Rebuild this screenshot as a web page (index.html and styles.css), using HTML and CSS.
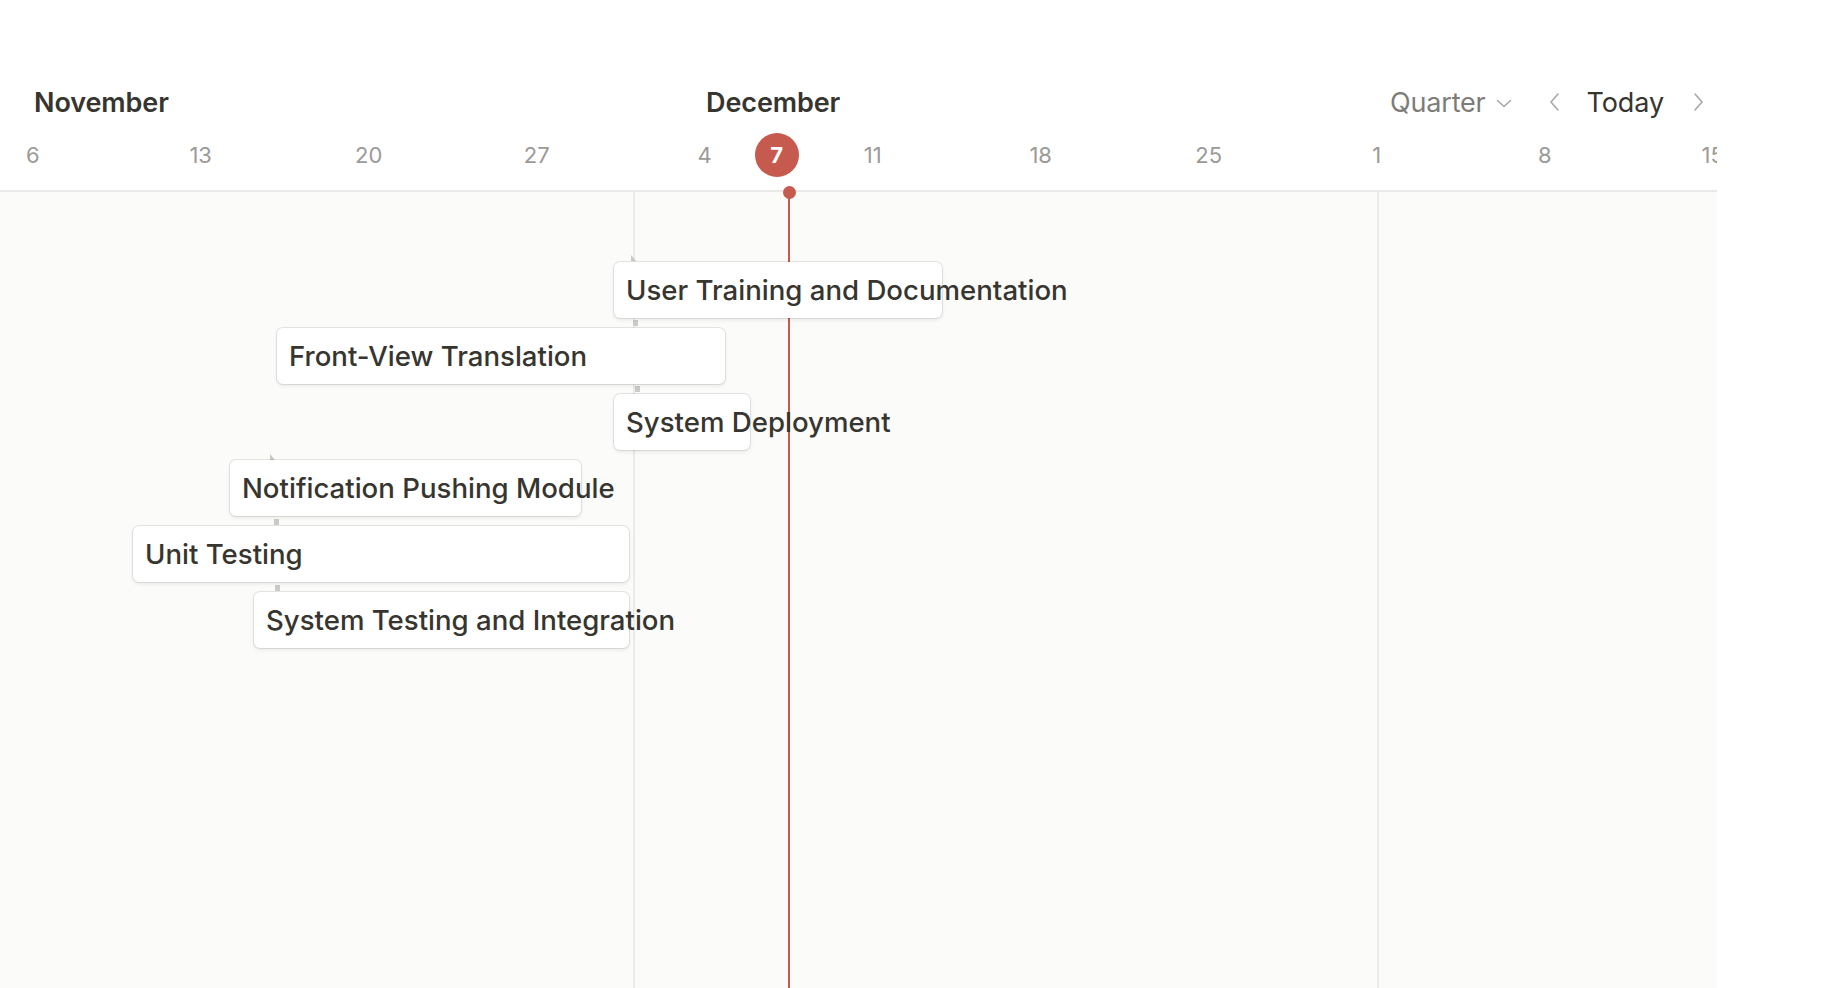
FILE: index.html
```html
<!DOCTYPE html>
<html lang="en">
<head>
<meta charset="utf-8">
<title>Timeline</title>
<link rel="stylesheet" href="styles.css">
</head>
<body>
<div class="timeline">
  <header class="head">
    <div class="toprow">
      <div class="months">
        <div class="month" style="width:672px">November</div>
        <div class="month">December</div>
      </div>
      <div class="controls">
        <div class="view">Quarter
          <svg class="chev-down" width="16" height="9" viewBox="0 0 16 9"><path d="M1.5 1.5l6.5 6 6.5-6" fill="none" stroke="#a5a4a0" stroke-width="1.5" stroke-linecap="round" stroke-linejoin="round"/></svg>
        </div>
        <svg class="nav prev" width="12" height="20" viewBox="0 0 12 20"><path d="M10 2L3 10l7 8" fill="none" stroke="#a9a8a5" stroke-width="1.6" stroke-linecap="round" stroke-linejoin="round"/></svg>
        <div class="today">Today</div>
        <svg class="nav next" width="12" height="20" viewBox="0 0 12 20"><path d="M2 2l7 8-7 8" fill="none" stroke="#a9a8a5" stroke-width="1.6" stroke-linecap="round" stroke-linejoin="round"/></svg>
      </div>
    </div>
    <div class="dates">
      <span class="date">6</span>
      <span class="date">13</span>
      <span class="date">20</span>
      <span class="date">27</span>
      <span class="date">4</span>
      <span class="date">11</span>
      <span class="date">18</span>
      <span class="date">25</span>
      <span class="date">1</span>
      <span class="date">8</span>
      <span class="date">15</span>
      <span class="badge">7</span>
    </div>
  </header>
  <main class="canvas">
    <div class="gridline" style="left:632.5px"></div>
    <div class="gridline" style="left:1376.5px"></div>
    <div class="now" style="left:788px"><span class="now-dot"></span></div>

    <svg class="tip" style="left:630px;top:63px" width="7" height="7" viewBox="0 0 7 7"><path d="M1 0v6h5z" fill="#c9c8c5"/></svg>
    <span class="stub" style="left:633px;top:128px"></span>
    <span class="stub" style="left:635px;top:194px"></span>
    <svg class="tip" style="left:269px;top:262px" width="7" height="7" viewBox="0 0 7 7"><path d="M1 0v6h5z" fill="#c9c8c5"/></svg>
    <span class="stub" style="left:274px;top:327px"></span>
    <span class="stub" style="left:275px;top:393px"></span>

    <div class="rows">
      <div class="row"><div class="bar" style="margin-left:614px;width:328px">User Training and Documentation</div></div>
      <div class="row"><div class="bar" style="margin-left:277px;width:448px">Front-View Translation</div></div>
      <div class="row"><div class="bar" style="margin-left:614px;width:136px">System Deployment</div></div>
      <div class="row"><div class="bar" style="margin-left:230px;width:351px">Notification Pushing Module</div></div>
      <div class="row"><div class="bar" style="margin-left:133px;width:496px">Unit Testing</div></div>
      <div class="row"><div class="bar" style="margin-left:254px;width:375px">System Testing and Integration</div></div>
    </div>
  </main>
</div>
</body>
</html>
```
FILE: styles.css
```css
* {
  box-sizing: border-box;
  margin: 0;
  padding: 0;
}

html,
body {
  background: #ffffff;
}

body {
  width: 1834px;
  height: 988px;
  overflow: hidden;
  font-family: "Inter", "Noto Sans", sans-serif;
  color: #37352f;
}

.timeline {
  width: 1717px;
  height: 988px;
  display: flex;
  flex-direction: column;
  overflow: hidden;
}

.head {
  flex: none;
  padding-top: 80px;
  padding-bottom: 12px;
  border-bottom: 2px solid #e9e9e7;
  background: #ffffff;
}

.toprow {
  display: flex;
  align-items: center;
  height: 44px;
}

.months {
  display: flex;
  padding-left: 34px;
}

.month {
  flex: none;
  font-size: 27px;
  font-weight: 600;
  letter-spacing: -0.1px;
  color: #37352f;
}

.controls {
  margin-left: auto;
  display: flex;
  align-items: center;
  padding-right: 12px;
}

.view {
  display: flex;
  align-items: center;
  gap: 10px;
  font-size: 27px;
  color: #7d7c78;
  letter-spacing: -0.2px;
}

.chev-down {
  margin-top: 2px;
}

.nav.prev {
  margin-left: 36px;
}

.today {
  margin-left: 27px;
  font-size: 27px;
  color: #37352f;
  letter-spacing: -0.1px;
}

.nav.next {
  margin-left: 29px;
}

.dates {
  position: relative;
  display: flex;
  align-items: center;
  height: 46px;
  margin-top: 8px;
  margin-left: -51.3px;
}

.date {
  flex: none;
  width: 168px;
  text-align: center;
  font-size: 22px;
  color: #9b9a97;
}

.badge {
  position: absolute;
  left: 806px;
  top: 1px;
  width: 44px;
  height: 44px;
  border-radius: 50%;
  background: #c75a4e;
  color: #ffffff;
  font-size: 22px;
  font-weight: 700;
  display: flex;
  align-items: center;
  justify-content: center;
}

.canvas {
  position: relative;
  flex: 1;
  background: #fbfbfa;
}

.gridline {
  position: absolute;
  top: 0;
  bottom: 0;
  width: 2px;
  background: #ebebe9;
}

.now {
  position: absolute;
  top: 0;
  bottom: 0;
  width: 2px;
  background: #c9594d;
  z-index: 1;
}

.now-dot {
  position: absolute;
  left: -5.5px;
  top: -6.5px;
  width: 13px;
  height: 13px;
  border-radius: 50%;
  background: #c75a4e;
}

.tip {
  position: absolute;
  z-index: 2;
}

.stub {
  position: absolute;
  width: 5px;
  height: 6px;
  background: #cbcac7;
  z-index: 2;
}

.rows {
  position: relative;
  z-index: 3;
  display: flex;
  flex-direction: column;
  gap: 10px;
  padding-top: 70px;
}

.row {
  display: flex;
  height: 56px;
}

.bar {
  flex: none;
  height: 56px;
  display: flex;
  align-items: center;
  padding-left: 12px;
  background: #ffffff;
  border-radius: 6px;
  box-shadow: rgba(15, 15, 15, 0.09) 0 0 0 1px, rgba(15, 15, 15, 0.08) 0 2px 4px;
  white-space: nowrap;
  font-size: 27.6px;
  font-weight: 500;
  color: #37352f;
}
```
